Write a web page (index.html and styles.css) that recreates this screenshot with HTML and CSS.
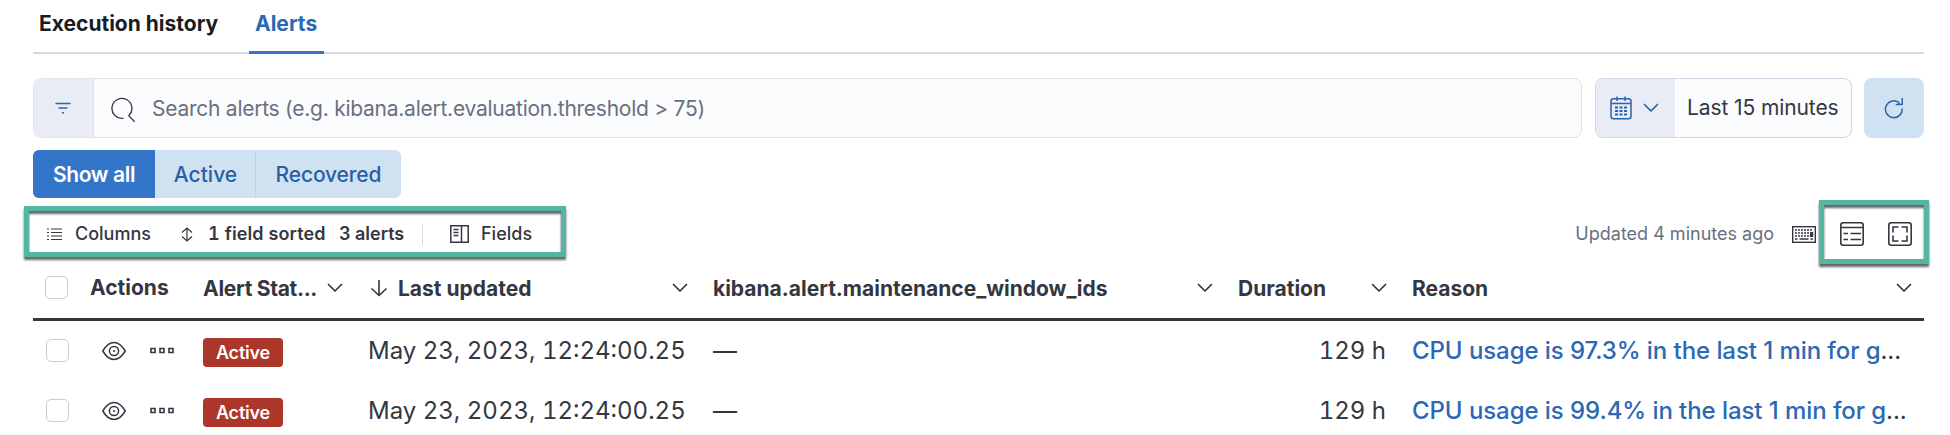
FILE: index.html
```html
<!DOCTYPE html>
<html lang="en">
<head>
<meta charset="utf-8">
<title>Alerts</title>
<link rel="stylesheet" href="styles.css">
</head>
<body>
<svg class="defs" width="0" height="0" aria-hidden="true">
  <symbol id="chevron" viewBox="0 0 16 10"><path d="M1.5 1.5 8 8l6.500-6.500" fill="none" stroke="currentColor" stroke-width="1.700" stroke-linecap="round" stroke-linejoin="round"/></symbol>
  <symbol id="eye" viewBox="0 0 24 20"><g fill="none" stroke="currentColor" stroke-width="1.500"><path d="M.8 10C4 4.500 7.500 1.500 12 1.500s8 3 11.200 8.500c-3.200 5.500-6.700 8.500-11.200 8.500S4 15.500.8 10Z"/><circle cx="12" cy="10" r="4.600"/></g><circle cx="12" cy="10" r="1.100" fill="currentColor"/></symbol>
  <symbol id="boxes" viewBox="0 0 25 8"><path d="M1 1.500h4v4H1zM10 1.500h4v4h-4zM19 1.500h4v4h-4z" fill="none" stroke="currentColor" stroke-width="1.600"/></symbol>
</svg>
<main class="page">
  <nav class="tabs">
    <a class="tab">Execution history</a>
    <a class="tab tab-selected">Alerts</a>
  </nav>

  <div class="query-bar">
    <div class="search">
      <button class="search-filter"><svg width="16" height="12" viewBox="0 0 16 12"><path d="M.5 1.500h15M3.500 6h9M7 10.800h2" stroke="currentColor" stroke-width="1.500"/></svg></button>
      <svg class="search-icon" width="26" height="26" viewBox="0 0 26 26"><path d="M12.500 21.300a10 10 0 1 1 5.500-2.800l-.3.200 6 6" fill="none" stroke="currentColor" stroke-width="1.300"/></svg>
      <span class="search-text">Search alerts (e.g. kibana.alert.evaluation.threshold &gt; 75)</span>
    </div>
    <div class="date">
      <button class="date-quick">
        <svg width="22" height="24" viewBox="0 0 22 24"><g fill="none" stroke="currentColor" stroke-width="1.500"><rect x="1" y="2.800" width="20" height="20" rx="2.500"/><path d="M1 7.500h20M7 .5v4.500M15 .5v4.500"/><path d="M5 11.500h12M5 15h12M5 18.500h12" stroke-width="1.800" stroke-dasharray="3 1.500"/></g></svg>
        <svg class="date-chevron" width="16" height="10"><use href="#chevron"/></svg>
      </button>
      <span class="date-text">Last 15 minutes</span>
    </div>
    <button class="refresh"><svg width="20" height="22" viewBox="0 0 20 22"><path d="M18.200 1v6.500h-6.500M14.800 7.500V5.500A8.400 8.400 0 1 0 18.200 11.500" fill="none" stroke="currentColor" stroke-width="1.500" stroke-linejoin="round"/></svg></button>
  </div>

  <div class="status-filter">
    <button class="status status-all">Show all</button>
    <button class="status status-active">Active</button>
    <button class="status status-recovered">Recovered</button>
  </div>

  <div class="toolbar">
    <svg class="list-icon" width="15" height="13" viewBox="0 0 15 13"><path d="M0 1h2M0 4.500h2M0 8h2M0 11.500h2M4 1h11M4 4.500h11M4 8h11M4 11.500h11" stroke="currentColor" stroke-width="1.200"/></svg>
    <span class="tool-text columns-text">Columns</span>
    <svg class="sort-icon" width="12" height="15" viewBox="0 0 12 15"><path d="M6 1v13M1 5.500 6 1l5 4.500M1 9.500 6 14l5-4.500" fill="none" stroke="currentColor" stroke-width="1.200"/></svg>
    <span class="tool-text sorted-text">1 field sorted</span>
    <span class="tool-text count-text">3 alerts</span>
    <span class="divider"></span>
    <svg class="fields-icon" width="19" height="18" viewBox="0 0 19 18"><path d="M.8.8h17.400v16.400H.8zM11.500 1v16M3.500 4.500h5M3.500 7.500h5M3.500 10.500h5" fill="none" stroke="currentColor" stroke-width="1.500"/></svg>
    <span class="tool-text fields-text">Fields</span>
    <span class="updated">Updated 4 minutes ago</span>
    <svg class="keyboard-icon" width="24" height="17" viewBox="0 0 24 17"><rect x=".7" y=".7" width="22.600" height="15.600" fill="none" stroke="currentColor" stroke-width="1.400"/><path d="M3 4h18M3 7h15M3 10h15" stroke="currentColor" stroke-width="1.500" stroke-dasharray="2 1"/><path d="M3 13h2.500M7.500 13h9M18.500 13H21" stroke="currentColor" stroke-width="1.500"/><path d="M18 6h3.200v5H18z" fill="currentColor"/></svg>
    <svg class="display-icon" width="24" height="24" viewBox="0 0 24 24"><g fill="none" stroke="currentColor" stroke-width="1.600"><rect x=".8" y=".8" width="22.400" height="22.400" rx="2.500"/><path d="M1 5.500h22M3.500 11.500h4.500M10.500 11.500H21M3.500 17.500h4.500M10.500 17.500H21"/></g></svg>
    <svg class="full-icon" width="24" height="24" viewBox="0 0 24 24"><g fill="none" stroke="currentColor" stroke-width="1.600"><rect x=".8" y=".8" width="22.400" height="22.400" rx="2.500"/><path d="M5 10.500V5h5.500M13.500 5H19v5.500M19 13.500V19h-5.500M10.500 19H5v-5.500"/></g></svg>
  </div>

  <div class="grid">
    <div class="row head">
      <span class="check"></span>
      <span class="h-actions">Actions</span>
      <span class="h-cell"><b class="w-status">Alert Stat...</b><svg width="16" height="10"><use href="#chevron"/></svg></span>
      <span class="h-cell"><svg class="sort-down" width="18" height="18" viewBox="0 0 18 18"><path d="M9 1v15.500M1.500 9.500 9 16.500l7.500-7" fill="none" stroke="currentColor" stroke-width="1.600"/></svg><b class="w-updated">Last updated</b><svg width="16" height="10"><use href="#chevron"/></svg></span>
      <span class="h-cell"><b class="w-window">kibana.alert.maintenance_window_ids</b><svg width="16" height="10"><use href="#chevron"/></svg></span>
      <span class="h-cell"><b class="w-duration">Duration</b><svg width="16" height="10"><use href="#chevron"/></svg></span>
      <span class="h-cell h-last"><b class="w-reason">Reason</b><svg width="16" height="10"><use href="#chevron"/></svg></span>
    </div>
    <div class="row">
      <span class="check"></span>
      <span class="actions"><svg width="24" height="20"><use href="#eye"/></svg><svg width="25" height="8"><use href="#boxes"/></svg></span>
      <span class="status-cell"><span class="badge">Active</span></span>
      <span class="time">May 23, 2023, 12:24:00.25</span>
      <span class="window">—</span>
      <span class="duration">129 h</span>
      <span class="reason"><a class="link">CPU usage is 97.3% in the last 1 min for g</a>...</span>
    </div>
    <div class="row">
      <span class="check"></span>
      <span class="actions"><svg width="24" height="20"><use href="#eye"/></svg><svg width="25" height="8"><use href="#boxes"/></svg></span>
      <span class="status-cell"><span class="badge">Active</span></span>
      <span class="time">May 23, 2023, 12:24:00.25</span>
      <span class="window">—</span>
      <span class="duration">129 h</span>
      <span class="reason"><a class="link">CPU usage is 99.4% in the last 1 min for g</a>...</span>
    </div>
  </div>
</main>
<div class="callout callout-left"></div>
<div class="callout callout-right"></div>
</body>
</html>
```

FILE: styles.css
```css
* { box-sizing: border-box; }
body {
  margin: 0;
  height: 435px;
  overflow: hidden;
  background: #fff;
  color: #343741;
  font-family: Inter, "Liberation Sans", sans-serif;
  font-size: 21px;
  white-space: nowrap;
}
button { border: 0; padding: 0; font: inherit; color: inherit; }
svg { display: block; flex: none; }
.defs { position: absolute; }
.page { padding: 0 26px 0 33px; }

.tabs { display: flex; height: 54px; border-bottom: 2px solid #d3dae6; gap: 31px; padding-left: 6px; }
.tab { height: 54px; line-height: 48px; color: #1a1c21; font-weight: 700; width: 179px; }
.tab-selected { width: 75px; padding-left: 6px; color: #2b68b5; border-bottom: 3px solid #3375c8; }

.query-bar { display: flex; margin-top: 24px; height: 60px; }
.search { display: flex; align-items: center; width: 1549px; background: #fbfcfe; border: 1.500px solid #dfe3ee; border-radius: 8px; overflow: hidden; }
.search-filter { display: flex; align-items: center; justify-content: center; align-self: stretch; width: 60px; padding-right: 2px; background: #e9ecf4; color: #2a65ab; border-right: 1px solid #dde1ef; }
.search-icon { margin: 3px 0 0 17px; color: #343741; }
.search-text { margin-left: 15px; color: #69707d; letter-spacing: -.25px; }
.date { display: flex; margin-left: 13px; width: 257px; border: 1.500px solid #d1d7e6; border-radius: 8px; background: #fbfcfd; overflow: hidden; }
.date-quick { display: flex; align-items: center; width: 79px; padding-left: 14px; background: #e9ecf4; color: #2a65ab; }
.date-chevron { margin-left: 11px; }
.date-text { line-height: 58px; margin-left: 12px; letter-spacing: -.1px; }
.refresh { display: flex; align-items: center; justify-content: center; margin-left: 12px; width: 60px; border-radius: 8px; background: #d0e2f2; color: #2a65ab; }

.status-filter { display: flex; width: 368px; margin-top: 12px; height: 48px; border-radius: 6px; overflow: hidden; background: #d0e2f2; color: #285fa3; font-weight: 500; }
.status-all { width: 122px; background: #3375c8; color: #fff; font-weight: 600; letter-spacing: -.35px; }
.status-active { width: 101px; padding-left: 1px; background: none; border-right: 1px solid #bfd3e9; }
.status-recovered { width: 145px; background: none; letter-spacing: -.15px; }

.toolbar { display: flex; align-items: center; height: 60px; margin-top: 6px; padding-left: 14px; font-size: 18px; }
.tool-text, .updated { margin-top: -1px; }
.tool-text { font-weight: 500; }
.columns-text { width: 106px; margin-left: 13px; }
.sorted-text { width: 131px; margin-left: 15px; font-weight: 600; letter-spacing: .1px; font-feature-settings: "tnum"; }
.count-text { width: 83px; font-weight: 600; }
.divider { width: 1px; height: 21px; background: #d3dae6; }
.fields-icon { margin-left: 27px; }
.fields-text { margin-left: 12px; }
.updated { margin-left: auto; color: #69707d; }
.keyboard-icon { margin-left: 18px; }
.display-icon { margin-left: 24px; }
.full-icon { margin: 0 12px 0 24px; }

.row { display: grid; grid-template-columns: 57px 113px 165px 345px 525px 174px 1fr; align-items: center; height: 60px; padding-bottom: 1px; }
.check { width: 23px; height: 23px; margin-left: 13px; border: 1.500px solid #caccd2; border-radius: 5px; background: #fff; }
.head { height: 57px; padding-bottom: 6px; border-bottom: 3px solid #343741; }
.head .check { margin: 0 0 2px 12px; }
.h-actions { font-weight: 700; margin-bottom: 2px; }
.h-cell { display: flex; align-items: center; justify-content: space-between; padding-right: 25px; font-weight: 700; }
.h-cell b { margin-right: auto; font-weight: 700; }
.h-cell .w-status { letter-spacing: -.3px; }
.h-last { padding-right: 12px; }
.sort-down { margin: 0 10px 0 2px; }
.actions { display: flex; align-items: center; gap: 24px; padding-left: 12px; }
.status-cell { display: flex; padding-top: 3px; }
.badge { width: 80px; height: 29px; border-radius: 4px; background: #ac3629; color: #fff; font-size: 18px; font-weight: 600; letter-spacing: -.2px; line-height: 30px; text-align: center; }
.time, .window, .duration, .reason { font-size: 24px; }
.time, .duration { font-feature-settings: "tnum"; }
.duration { text-align: right; padding-right: 26px; }
.reason { letter-spacing: -.07px; }
.link { color: #2b68b5; font-weight: 500; }

.callout { position: absolute; border: 5px solid #54b5a0; filter: drop-shadow(0 3px 1px rgba(0, 0, 0, .6)); }
.callout-left { left: 24px; top: 206px; width: 542px; height: 51px; }
.callout-right { left: 1819px; top: 200px; width: 110px; height: 64px; }
```
